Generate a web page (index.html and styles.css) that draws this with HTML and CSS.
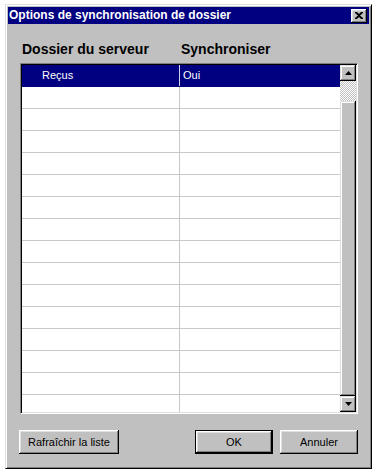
FILE: index.html
```html
<!DOCTYPE html>
<html lang="fr">
<head>
<meta charset="utf-8">
<title>Options de synchronisation de dossier</title>
<link rel="stylesheet" href="styles.css">
</head>
<body>
<div class="window">
  <div class="titlebar">
    <span class="title">Options de synchronisation de dossier</span>
    <span class="close">
      <svg width="8" height="7" viewBox="0 0 8 7"><path d="M0 0h2l2 2 2-2h2v1L5 3.5 8 6v1H6L4 5 2 7H0V6l3-2.5L0 1z" fill="#000"/></svg>
    </span>
  </div>
  <div class="headers">
    <span class="h-col1">Dossier du serveur</span>
    <span class="h-col2">Synchroniser</span>
  </div>
  <div class="list">
    <div class="rows">
      <div class="row selected"><div class="c1">Reçus</div><div class="c2">Oui</div></div>
      <div class="row"><div class="c1"></div><div class="c2"></div></div>
      <div class="row"><div class="c1"></div><div class="c2"></div></div>
      <div class="row"><div class="c1"></div><div class="c2"></div></div>
      <div class="row"><div class="c1"></div><div class="c2"></div></div>
      <div class="row"><div class="c1"></div><div class="c2"></div></div>
      <div class="row"><div class="c1"></div><div class="c2"></div></div>
      <div class="row"><div class="c1"></div><div class="c2"></div></div>
      <div class="row"><div class="c1"></div><div class="c2"></div></div>
      <div class="row"><div class="c1"></div><div class="c2"></div></div>
      <div class="row"><div class="c1"></div><div class="c2"></div></div>
      <div class="row"><div class="c1"></div><div class="c2"></div></div>
      <div class="row"><div class="c1"></div><div class="c2"></div></div>
      <div class="row"><div class="c1"></div><div class="c2"></div></div>
      <div class="row"><div class="c1"></div><div class="c2"></div></div>
      <div class="row"><div class="c1"></div><div class="c2"></div></div>
    </div>
    <div class="scrollbar">
      <div class="sbtn"><svg width="7" height="4" viewBox="0 0 7 4"><path d="M3.5 0L7 4H0z" fill="#000"/></svg></div>
      <div class="track"></div>
      <div class="thumb"></div>
      <div class="sbtn"><svg width="7" height="4" viewBox="0 0 7 4"><path d="M0 0h7L3.5 4z" fill="#000"/></svg></div>
    </div>
  </div>
  <div class="buttons">
    <button class="btn btn-refresh">Rafraîchir la liste</button>
    <span class="spacer"></span>
    <button class="btn btn-default">OK</button>
    <button class="btn btn-cancel">Annuler</button>
  </div>
</div>
</body>
</html>
```

FILE: styles.css
```css
* { box-sizing: border-box; }
html, body { margin: 0; background: #fff; }
body {
  font-family: "Liberation Sans", Arial, sans-serif;
  font-size: 11px;
  color: #000;
}
.window {
  margin: 4px 0 0 5px;
  width: 367px;
  height: 465px;
  background: #c0c0c0;
  border: 1px solid;
  border-color: #dfdfdf #000 #000 #dfdfdf;
  box-shadow: inset 1px 1px #fff, inset -1px -1px #808080;
  padding: 2px;
  display: flex;
  flex-direction: column;
}
.titlebar {
  height: 17px;
  background: #000080;
  display: flex;
  align-items: center;
  justify-content: space-between;
  padding: 0 2px 0 1px;
  flex: none;
}
.title {
  color: #fff;
  font-weight: bold;
  font-size: 12px;
  line-height: 17px;
  white-space: nowrap;
}
.close {
  width: 16px;
  height: 14px;
  background: #c0c0c0;
  box-shadow: inset -1px -1px #000, inset 1px 1px #fff, inset -2px -2px #808080, inset 2px 2px #dfdfdf;
  display: flex;
  align-items: center;
  justify-content: center;
  padding: 0 1px 1px 0;
}
.close svg { display: block; }
.headers {
  margin: 17px 0 0 14px;
  height: 16px;
  display: flex;
  font-size: 14px;
  font-weight: bold;
  line-height: 16px;
  color: #000;
  flex: none;
}
.h-col1 { width: 159px; }
.list {
  margin: 6px 0 0 12px;
  width: 338px;
  height: 351px;
  background: #fff;
  border: 1px solid;
  border-color: #808080 #fff #fff #808080;
  box-shadow: inset 1px 1px #000, inset -1px -1px #dfdfdf;
  padding: 1px;
  display: flex;
  flex: none;
}
.rows {
  flex: 1;
  height: 347px;
  overflow: hidden;
}
.row {
  display: flex;
  height: 22px;
  border-bottom: 1px solid #c8c8c8;
  line-height: 21px;
}
.c1 {
  width: 158px;
  border-right: 1px solid #c8c8c8;
  padding-left: 20px;
}
.c2 {
  flex: 1;
  padding-left: 3px;
}
.row.selected {
  background: #000080;
  color: #fff;
  border-bottom-color: #000080;
}
.row.selected .c1 { border-right-color: #d0d0e8; }
.scrollbar {
  width: 16px;
  height: 347px;
  display: flex;
  flex-direction: column;
}
.sbtn {
  height: 16px;
  background: #c0c0c0;
  box-shadow: inset -1px -1px #000, inset 1px 1px #dfdfdf, inset -2px -2px #808080, inset 2px 2px #fff;
  display: flex;
  align-items: center;
  justify-content: center;
  flex: none;
}
.sbtn svg { display: block; }
.track {
  height: 20px;
  flex: none;
  background: repeating-conic-gradient(#fff 0 25%, #c0c0c0 0 50%) 0 0 / 2px 2px;
}
.thumb {
  flex: 1;
  background: #c0c0c0;
  box-shadow: inset -1px -1px #000, inset 1px 1px #dfdfdf, inset -2px -2px #808080, inset 2px 2px #fff;
}
.buttons {
  margin: 16px 0 0 11px;
  width: 339px;
  height: 24px;
  display: flex;
  gap: 7px;
  flex: none;
}
.spacer { flex: 1; }
.btn {
  font-family: "Liberation Sans", Arial, sans-serif;
  font-size: 11px;
  color: #000;
  background: #c0c0c0;
  border: none;
  padding: 0;
  margin: 0;
  height: 24px;
  box-shadow: inset -1px -1px #000, inset 1px 1px #fff, inset -2px -2px #808080, inset 2px 2px #dfdfdf;
}
.btn-refresh { width: 100px; }
.btn-default {
  width: 78px;
  border: 1px solid #000;
  box-shadow: inset -1px -1px #000, inset 1px 1px #fff, inset -2px -2px #808080, inset 2px 2px #dfdfdf;
}
.btn-cancel { width: 78px; }
```
